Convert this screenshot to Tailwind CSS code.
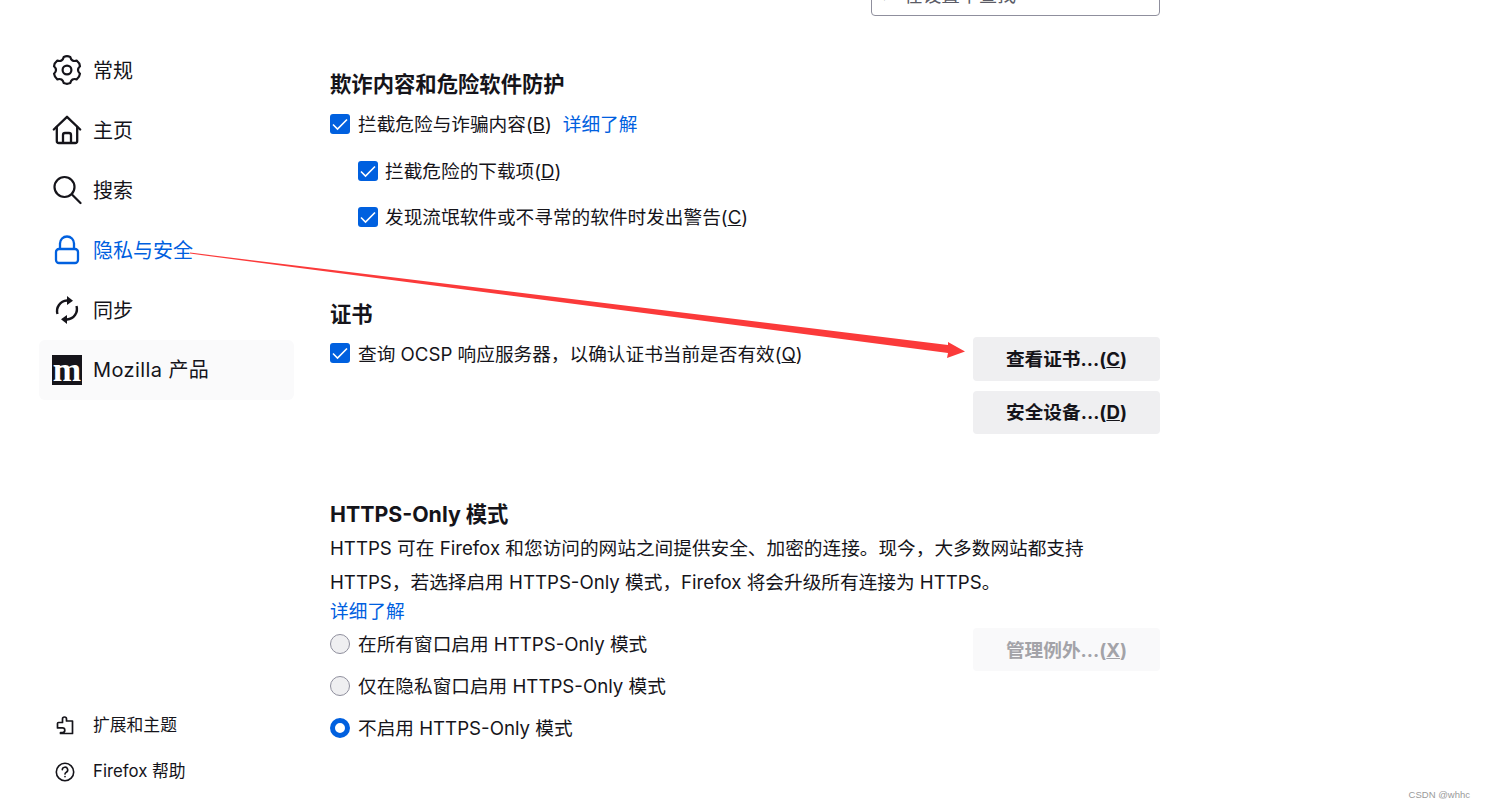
<!DOCTYPE html>
<html lang="zh-CN">
<head>
<meta charset="utf-8">
<title>Firefox 设置</title>
<script src="https://cdn.jsdelivr.net/npm/@tailwindcss/browser@4"></script>
</head>
<body class="bg-white">
<div class="relative flex h-[809px] w-[1485px] overflow-hidden bg-white text-[#15141a] font-['Inter','Noto_Sans_CJK_SC',sans-serif]">
  <aside class="ml-[39px] flex w-[255px] shrink-0 flex-col justify-between pt-[40px] pb-[17px]">
    <nav class="flex flex-col text-[20px]">
      <a class="flex h-[60px] items-center gap-[11px] pl-[13px]"><svg class="h-[30px] w-[30px]" viewBox="0 0 30 30" fill="none" stroke="#15141a" stroke-width="2.2" stroke-linejoin="round"><path d="M11.73 1.9Q15 .5 18.27 1.9Q19.5 7.2 24.71 5.62Q27.56 7.75 27.97 11.27Q24 15 27.97 18.73Q27.56 22.25 24.71 24.38Q19.5 22.8 18.27 28.1Q15 29.5 11.73 28.1Q10.5 22.8 5.29 24.38Q2.44 22.25 2.03 18.73Q6 15 2.03 11.27Q2.44 7.75 5.29 5.62Q10.5 7.2 11.73 1.9z"/><circle cx="15" cy="15" r="4.4"/></svg><span class="pt-[2px]">常规</span></a>
      <a class="flex h-[60px] items-center gap-[11px] pl-[13px]"><svg class="h-[30px] w-[30px]" viewBox="0 0 30 30" fill="none" stroke="#15141a" stroke-width="2.3" stroke-linejoin="round" stroke-linecap="round"><path d="M1.8 14.5 15 1.8l13.2 12.7"/><path d="M4.8 12v14a2 2 0 0 0 2 2h16.4a2 2 0 0 0 2-2V12"/><path d="M11 27.5V20a2 2 0 0 1 2-2h4a2 2 0 0 1 2 2v7.5"/></svg><span class="pt-[2px]">主页</span></a>
      <a class="flex h-[60px] items-center gap-[11px] pl-[13px]"><svg class="h-[30px] w-[30px]" viewBox="0 0 30 30" fill="none" stroke="#15141a" stroke-width="2.2" stroke-linecap="round"><circle cx="12.5" cy="12" r="10"/><path d="m20 19.5 8.5 8.5"/></svg><span class="pt-[2px]">搜索</span></a>
      <a class="flex h-[60px] items-center gap-[11px] pl-[13px] text-[#0060df]"><svg class="h-[30px] w-[30px]" viewBox="0 0 30 30" fill="none" stroke="#0060df" stroke-width="2.3"><rect x="4" y="14" width="22" height="14" rx="3"/><path d="M8 14V8.5a7 7 0 0 1 14 0V14"/></svg><span class="pt-[2px]">隐私与安全</span></a>
      <a class="flex h-[60px] items-center gap-[11px] pl-[13px]"><svg class="h-[30px] w-[30px]" viewBox="0 0 30 30" fill="none" stroke="#15141a" stroke-width="2.4"><path d="M5.5 19A10.5 10.5 0 0 1 15 5.5h1"/><path d="M24.5 11A10.5 10.5 0 0 1 15 24.5h-1"/><path d="M15 1 21 5.8 15 10z" fill="#15141a" stroke="none"/><path d="M15 20 9 24.2 15 29z" fill="#15141a" stroke="none"/></svg><span class="pt-[2px]">同步</span></a>
      <a class="flex h-[60px] items-center gap-[11px] rounded-[6px] bg-[#fafafb] pl-[13px]"><span class="flex h-[30px] w-[30px] items-center justify-center bg-[#15141a] font-['Liberation_Serif',serif] text-[34px] leading-[30px] font-bold text-white">m</span><span class="tracking-[0.4px]">Mozilla 产品</span></a>
    </nav>
    <div class="flex flex-col gap-[6px] text-[16.8px]">
      <a class="flex h-[40px] items-center gap-[18px] pl-[16px]"><svg class="h-[20px] w-[20px]" viewBox="0 0 20 20" fill="none" stroke="#15141a" stroke-width="1.7" stroke-linejoin="round"><path d="M7.5 3a2 2 0 0 1 4 0v2h6v12.5H5.5v-1h2a2.3 2.3 0 0 0 0-4.6h-5V7.5a1 1 0 0 1 1-1h4z"/></svg><span>扩展和主题</span></a>
      <a class="flex h-[40px] items-center gap-[18px] pl-[16px]"><svg class="h-[20px] w-[20px]" viewBox="0 0 20 20" fill="none" stroke="#15141a" stroke-width="1.6" stroke-linecap="round"><circle cx="10" cy="10" r="8.7"/><path d="M7.3 7.8a2.7 2.7 0 1 1 4 2.4c-.9.5-1.3 1-1.3 1.9"/><path d="M10 14.6v.2"/></svg><span>Firefox 帮助</span></a>
    </div>
  </aside>

  <main class="ml-[36px] w-[830px] shrink-0 text-[18.67px]">
    <div class="ml-auto -mt-[25px] flex h-[41px] w-[289px] items-center gap-[12px] rounded-[4px] border border-[#8f8f9d] pl-[12px] text-[#5b5b66]"><span class="text-[14px]">⌕</span><span class="text-[18.67px]">在设置中查找</span></div>

    <section class="mt-[53px]">
      <h2 class="h-[30px] text-[21.33px] leading-[30px] font-bold">欺诈内容和危险软件防护</h2>
      <div class="mt-[10px] flex h-[30px] items-center gap-[8px]">
        <svg class="h-[20px] w-[20px] shrink-0" viewBox="0 0 20 20"><rect width="20" height="20" rx="3" fill="#0060df"/><path d="m3 10.5 4.5 4.5L17 5.5" fill="none" stroke="#fff" stroke-width="1.6"/></svg>
        <span class="pt-[2px]">拦截危险与诈骗内容(<span class="underline">B</span>)</span><a class="ml-[3px] pt-[2px] text-[#0060df]">详细了解</a>
      </div>
      <div class="mt-[17px] ml-[28px] flex h-[30px] items-center gap-[7px]">
        <svg class="h-[20px] w-[20px] shrink-0" viewBox="0 0 20 20"><rect width="20" height="20" rx="3" fill="#0060df"/><path d="m3 10.5 4.5 4.5L17 5.5" fill="none" stroke="#fff" stroke-width="1.6"/></svg>
        <span class="pt-[2px]">拦截危险的下载项(<span class="underline">D</span>)</span>
      </div>
      <div class="mt-[16px] ml-[28px] flex h-[30px] items-center gap-[7px]">
        <svg class="h-[20px] w-[20px] shrink-0" viewBox="0 0 20 20"><rect width="20" height="20" rx="3" fill="#0060df"/><path d="m3 10.5 4.5 4.5L17 5.5" fill="none" stroke="#fff" stroke-width="1.6"/></svg>
        <span class="pt-[2px]">发现流氓软件或不寻常的软件时发出警告(<span class="underline">C</span>)</span>
      </div>
    </section>

    <section class="mt-[67px]">
      <h2 class="h-[30px] text-[21.33px] leading-[30px] font-bold">证书</h2>
      <div class="mt-[8px] flex items-start justify-between">
        <div class="mt-[1px] flex h-[30px] items-center gap-[8px]">
          <svg class="h-[20px] w-[20px] shrink-0" viewBox="0 0 20 20"><rect width="20" height="20" rx="3" fill="#0060df"/><path d="m3 10.5 4.5 4.5L17 5.5" fill="none" stroke="#fff" stroke-width="1.6"/></svg>
          <span class="pt-[4px]">查询 OCSP 响应服务器，以确认证书当前是否有效(<span class="underline">Q</span>)</span>
        </div>
        <div class="flex w-[187px] flex-col gap-[10px]">
          <button class="h-[44px] rounded-[4px] bg-[#efeff1] pt-[2px] font-bold">查看证书...(<span class="underline">C</span>)</button>
          <button class="h-[43px] rounded-[4px] bg-[#efeff1] font-bold">安全设备...(<span class="underline">D</span>)</button>
        </div>
      </div>
    </section>

    <section class="mt-[65px]">
      <h2 class="h-[30px] text-[21.33px] leading-[30px] font-bold">HTTPS-Only 模式</h2>
      <p class="mt-[3px] w-[770px] leading-[34px]">HTTPS 可在 Firefox 和您访问的网站之间提供安全、加密的连接。现今，大多数网站都支持 HTTPS，若选择启用 HTTPS-Only 模式，Firefox 将会升级所有连接为 HTTPS。</p>
      <a class="block h-[24px] leading-[24px] text-[#0060df]">详细了解</a>
      <div class="mt-[4px] flex items-start justify-between">
        <div class="flex flex-col gap-[12px] pt-[1px]">
          <label class="flex h-[30px] items-center gap-[8px]"><span class="h-[20px] w-[20px] shrink-0 rounded-full border border-[#8f8f9d] bg-[#efeff1]"></span><span class="pt-[2px]">在所有窗口启用 HTTPS-Only 模式</span></label>
          <label class="flex h-[30px] items-center gap-[8px]"><span class="h-[20px] w-[20px] shrink-0 rounded-full border border-[#8f8f9d] bg-[#efeff1]"></span><span class="pt-[2px]">仅在隐私窗口启用 HTTPS-Only 模式</span></label>
          <label class="flex h-[30px] items-center gap-[8px]"><span class="h-[20px] w-[20px] shrink-0 rounded-full border-[5px] border-[#0060df] bg-white"></span><span class="pt-[2px]">不启用 HTTPS-Only 模式</span></label>
        </div>
        <button class="h-[43px] w-[187px] rounded-[4px] bg-[#f9f9fa] pt-[2px] font-bold text-[#a3a3a8]">管理例外...(<span class="underline">X</span>)</button>
      </div>
    </section>
  </main>

  <svg class="pointer-events-none absolute top-0 left-0 h-[809px] w-[1485px]" viewBox="0 0 1485 809"><path d="M190 252.6 948 345 948 342 965 351.5 947 358 948 353 190 253.6z" fill="#fb3a3a"/></svg>
  <span class="absolute right-[15px] bottom-[7px] font-['Liberation_Sans',sans-serif] text-[9.5px] text-[#9a9a9a]">CSDN @whhc</span>
</div>
</body>
</html>
